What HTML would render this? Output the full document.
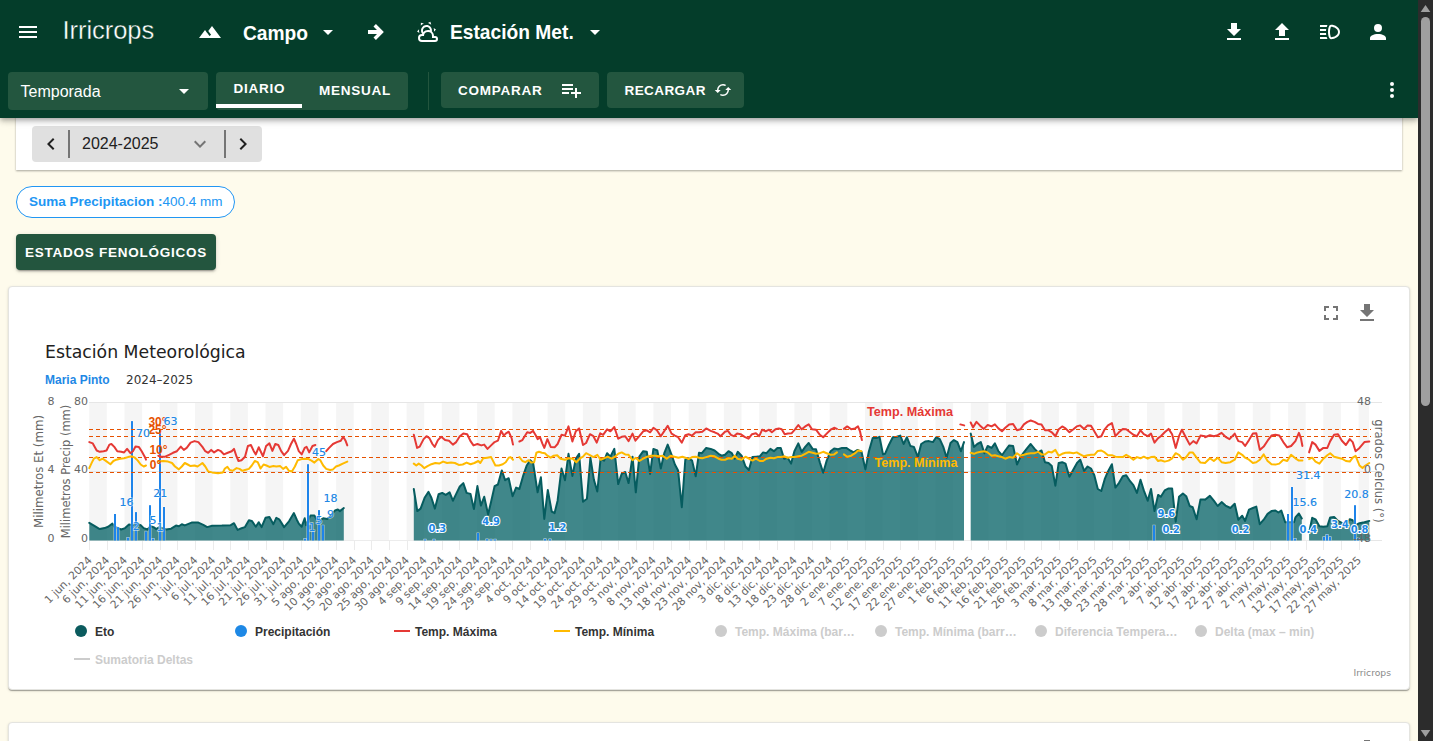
<!DOCTYPE html>
<html lang="es">
<head>
<meta charset="utf-8">
<title>Irricrops</title>
<style>
*{box-sizing:border-box;margin:0;padding:0}
html,body{width:1433px;height:741px;overflow:hidden}
body{position:relative;background:#fefbec;font-family:"Liberation Sans",sans-serif;color:#212121}
.abs{position:absolute}
svg{display:block}
/* top bars */
#bar1{left:0;top:0;width:1418px;height:64px;background:#043d2a}
#bar2{left:0;top:64px;width:1418px;height:54px;background:#043d2a;box-shadow:0 2px 4px -1px rgba(0,0,0,.2),0 4px 5px 0 rgba(0,0,0,.14),0 1px 10px 0 rgba(0,0,0,.12)}
.ic{position:absolute;width:24px;height:24px;fill:#fff}
#logo{left:62.5px;top:11.5px;font-size:25.5px;line-height:36px;color:#fff;letter-spacing:-0.05px;font-weight:400;white-space:nowrap;-webkit-text-stroke:0.35px #043d2a}
.navt{color:#fff;font-weight:700;font-size:20.6px;line-height:24px;white-space:nowrap;transform:scaleX(.932);transform-origin:0 50%}
.pill{background:#23563f;border-radius:4px}
.btxt{color:#fff;font-weight:700;font-size:13.5px;letter-spacing:0.75px;line-height:36px;white-space:nowrap}
/* scrollbar */
#sb{left:1418px;top:0;width:15px;height:741px;background:#2c2c2c}
#sbthumb{left:1421px;top:17px;width:9px;height:389px;border-radius:5px;background:#9f9f9f}
/* content */
#card1{left:16px;top:100px;width:1386px;height:70px;background:#fff;border-radius:0;box-shadow:0 1px 2px rgba(0,0,0,.35)}
#dsel{left:32px;top:126px;width:230px;height:36px;background:#e0e0e0;border-radius:4px}
#chip{left:16px;top:186px;width:219px;height:32px;border:1px solid #2196f3;border-radius:16px;background:#fff;color:#2196f3;font-size:13.5px;line-height:30px;padding-left:12px;white-space:nowrap}
#estados{left:16px;top:234px;width:200px;height:36px;background:#23553e;border-radius:4px;box-shadow:0 3px 1px -2px rgba(0,0,0,.2),0 2px 2px 0 rgba(0,0,0,.14),0 1px 5px 0 rgba(0,0,0,.12);text-align:center}
.card{background:#fff;border-radius:4px;border:1px solid #e4e4e0;box-shadow:0 2px 1px -1px rgba(0,0,0,.2),0 1px 1px 0 rgba(0,0,0,.14),0 1px 3px 0 rgba(0,0,0,.12)}
#card2{left:8px;top:286px;width:1402px;height:404px}
#card3{left:8px;top:722px;width:1402px;height:60px}
</style>
</head>
<body>
<!-- content behind bars -->
<div id="card1" class="abs"></div>
<div id="dsel" class="abs"></div>
<svg class="abs" style="left:38.7px;top:132px;fill:#212121" width="24" height="24" viewBox="0 0 24 24"><path d="M15.41,16.58L10.83,12L15.41,7.41L14,6L8,12L14,18L15.41,16.58Z"/></svg>
<div class="abs" style="left:68px;top:130px;width:2px;height:28px;background:#757575"></div>
<div class="abs" style="left:82px;top:132px;font-size:16px;line-height:24px;color:#212121">2024-2025</div>
<svg class="abs" style="left:188px;top:132px;fill:#757575" width="24" height="24" viewBox="0 0 24 24"><path d="M7.41,8.58L12,13.17L16.59,8.58L18,10L12,16L6,10L7.41,8.58Z"/></svg>
<div class="abs" style="left:224px;top:130px;width:2px;height:28px;background:#757575"></div>
<svg class="abs" style="left:231px;top:132px;fill:#212121" width="24" height="24" viewBox="0 0 24 24"><path d="M8.59,16.58L13.17,12L8.59,7.41L10,6L16,12L10,18L8.59,16.58Z"/></svg>

<div id="chip" class="abs"><b>Suma Precipitacion :</b>400.4 mm</div>
<div id="estados" class="abs"><span class="btxt" style="position:relative;top:1px">ESTADOS FENOLÓGICOS</span></div>

<div id="card2" class="abs card"></div>
<div id="card3" class="abs card"></div>
<svg class="abs" style="left:1355px;top:737px;fill:#757575" width="24" height="24" viewBox="0 0 24 24"><path d="M5,20H19V18H5M19,9H15V3H9V9H5L12,16L19,9Z"/></svg>

<!-- CHART -->
<svg id="chart" class="abs" style="left:0;top:287px" width="1418" height="402" viewBox="0 287 1418 402" font-family="'DejaVu Sans',sans-serif">
<rect x="89.2" y="402.5" width="17.6" height="138.0" fill="#f5f5f5"/>
<rect x="124.5" y="402.5" width="17.6" height="138.0" fill="#f5f5f5"/>
<rect x="159.8" y="402.5" width="17.6" height="138.0" fill="#f5f5f5"/>
<rect x="195.0" y="402.5" width="17.6" height="138.0" fill="#f5f5f5"/>
<rect x="230.3" y="402.5" width="17.6" height="138.0" fill="#f5f5f5"/>
<rect x="265.5" y="402.5" width="17.6" height="138.0" fill="#f5f5f5"/>
<rect x="300.8" y="402.5" width="17.6" height="138.0" fill="#f5f5f5"/>
<rect x="336.1" y="402.5" width="17.6" height="138.0" fill="#f5f5f5"/>
<rect x="371.3" y="402.5" width="17.6" height="138.0" fill="#f5f5f5"/>
<rect x="406.6" y="402.5" width="17.6" height="138.0" fill="#f5f5f5"/>
<rect x="441.8" y="402.5" width="17.6" height="138.0" fill="#f5f5f5"/>
<rect x="477.1" y="402.5" width="17.6" height="138.0" fill="#f5f5f5"/>
<rect x="512.4" y="402.5" width="17.6" height="138.0" fill="#f5f5f5"/>
<rect x="547.6" y="402.5" width="17.6" height="138.0" fill="#f5f5f5"/>
<rect x="582.9" y="402.5" width="17.6" height="138.0" fill="#f5f5f5"/>
<rect x="618.1" y="402.5" width="17.6" height="138.0" fill="#f5f5f5"/>
<rect x="653.4" y="402.5" width="17.6" height="138.0" fill="#f5f5f5"/>
<rect x="688.7" y="402.5" width="17.6" height="138.0" fill="#f5f5f5"/>
<rect x="723.9" y="402.5" width="17.6" height="138.0" fill="#f5f5f5"/>
<rect x="759.2" y="402.5" width="17.6" height="138.0" fill="#f5f5f5"/>
<rect x="794.4" y="402.5" width="17.6" height="138.0" fill="#f5f5f5"/>
<rect x="829.7" y="402.5" width="17.6" height="138.0" fill="#f5f5f5"/>
<rect x="865.0" y="402.5" width="17.6" height="138.0" fill="#f5f5f5"/>
<rect x="900.2" y="402.5" width="17.6" height="138.0" fill="#f5f5f5"/>
<rect x="935.5" y="402.5" width="17.6" height="138.0" fill="#f5f5f5"/>
<rect x="970.8" y="402.5" width="17.6" height="138.0" fill="#f5f5f5"/>
<rect x="1006.0" y="402.5" width="17.6" height="138.0" fill="#f5f5f5"/>
<rect x="1041.3" y="402.5" width="17.6" height="138.0" fill="#f5f5f5"/>
<rect x="1076.5" y="402.5" width="17.6" height="138.0" fill="#f5f5f5"/>
<rect x="1111.8" y="402.5" width="17.6" height="138.0" fill="#f5f5f5"/>
<rect x="1147.0" y="402.5" width="17.6" height="138.0" fill="#f5f5f5"/>
<rect x="1182.3" y="402.5" width="17.6" height="138.0" fill="#f5f5f5"/>
<rect x="1217.6" y="402.5" width="17.6" height="138.0" fill="#f5f5f5"/>
<rect x="1252.8" y="402.5" width="17.6" height="138.0" fill="#f5f5f5"/>
<rect x="1288.1" y="402.5" width="17.6" height="138.0" fill="#f5f5f5"/>
<rect x="1323.3" y="402.5" width="17.6" height="138.0" fill="#f5f5f5"/>
<rect x="1358.6" y="402.5" width="10.4" height="138.0" fill="#f5f5f5"/>
<path d="M89 402.5H1382" stroke="#e6e6e6" stroke-width="1"/>
<path d="M89 471.5H1382" stroke="#e6e6e6" stroke-width="1"/>
<path d="M89 540.5H1382" stroke="#e6e6e6" stroke-width="1"/>
<path d="M89 540.5H1369" stroke="#ececec" stroke-width="1"/>
<path d="M89.5 541V550M107.5 541V550M125.5 541V550M142.5 541V550M160.5 541V550M177.5 541V550M195.5 541V550M213.5 541V550M230.5 541V550M248.5 541V550M266.5 541V550M283.5 541V550M301.5 541V550M318.5 541V550M336.5 541V550M354.5 541V550M371.5 541V550M389.5 541V550M407.5 541V550M424.5 541V550M442.5 541V550M459.5 541V550M477.5 541V550M495.5 541V550M512.5 541V550M530.5 541V550M548.5 541V550M565.5 541V550M583.5 541V550M601.5 541V550M618.5 541V550M636.5 541V550M653.5 541V550M671.5 541V550M689.5 541V550M706.5 541V550M724.5 541V550M742.5 541V550M759.5 541V550M777.5 541V550M794.5 541V550M812.5 541V550M830.5 541V550M847.5 541V550M865.5 541V550M883.5 541V550M900.5 541V550M918.5 541V550M935.5 541V550M953.5 541V550M971.5 541V550M988.5 541V550M1006.5 541V550M1024.5 541V550M1041.5 541V550M1059.5 541V550M1077.5 541V550M1094.5 541V550M1112.5 541V550M1129.5 541V550M1147.5 541V550M1165.5 541V550M1182.5 541V550M1200.5 541V550M1218.5 541V550M1235.5 541V550M1253.5 541V550M1270.5 541V550M1288.5 541V550M1306.5 541V550M1323.5 541V550M1341.5 541V550M1359.5 541V550" stroke="#ebebeb" stroke-width="1" fill="none"/>
<path d="M89.3,540.5 L89.3,522.8 94.8,526.2 99.7,529.1 104.6,528.1 108.1,526.7 112.4,523.6 114.3,526.7 121.2,529.5 125.1,528.1 129.0,524.4 132.9,525.2 136.2,523.6 140.7,525.2 143.7,528.1 147.6,529.5 150.5,526.2 153.5,527.1 156.4,529.1 159.3,527.1 166.2,529.5 171.1,528.7 176.0,525.6 178.9,526.2 181.8,524.2 184.8,525.4 191.6,522.6 198.4,522.6 203.3,524.8 207.2,527.1 212.1,525.8 221.9,525.6 230.7,525.2 234.0,523.2 237.6,529.9 241.5,528.3 245.0,527.1 248.9,520.3 251.8,520.9 255.8,526.7 258.7,522.2 261.6,527.1 265.5,517.8 269.4,517.0 273.4,524.2 276.3,517.9 279.2,519.3 284.1,527.1 289.0,521.3 293.9,513.1 296.8,519.7 298.8,523.6 301.7,526.7 304.7,518.3 306.0,525.2 310.5,515.4 314.4,515.4 316.4,519.3 319.3,520.9 323.2,518.3 327.2,518.9 331.1,515.4 335.0,510.5 337.9,509.5 339.9,511.1 343.8,508.0 L343.8,540.5Z" fill="#005f63" fill-opacity="0.75"/>
<polyline points="89.3,522.8 94.8,526.2 99.7,529.1 104.6,528.1 108.1,526.7 112.4,523.6 114.3,526.7 121.2,529.5 125.1,528.1 129.0,524.4 132.9,525.2 136.2,523.6 140.7,525.2 143.7,528.1 147.6,529.5 150.5,526.2 153.5,527.1 156.4,529.1 159.3,527.1 166.2,529.5 171.1,528.7 176.0,525.6 178.9,526.2 181.8,524.2 184.8,525.4 191.6,522.6 198.4,522.6 203.3,524.8 207.2,527.1 212.1,525.8 221.9,525.6 230.7,525.2 234.0,523.2 237.6,529.9 241.5,528.3 245.0,527.1 248.9,520.3 251.8,520.9 255.8,526.7 258.7,522.2 261.6,527.1 265.5,517.8 269.4,517.0 273.4,524.2 276.3,517.9 279.2,519.3 284.1,527.1 289.0,521.3 293.9,513.1 296.8,519.7 298.8,523.6 301.7,526.7 304.7,518.3 306.0,525.2 310.5,515.4 314.4,515.4 316.4,519.3 319.3,520.9 323.2,518.3 327.2,518.9 331.1,515.4 335.0,510.5 337.9,509.5 339.9,511.1 343.8,508.0" fill="none" stroke="#065c5f" stroke-width="2" stroke-linejoin="round" stroke-linecap="round"/>
<path d="M413.8,540.5 L413.8,489.0 417.3,511.1 420.6,508.6 424.6,497.8 428.5,491.9 431.4,497.8 434.9,508.6 438.6,494.3 442.2,492.9 445.7,494.9 449.6,492.3 452.9,500.7 456.2,493.9 459.8,486.5 463.3,483.1 466.6,492.9 470.5,493.9 473.9,509.1 477.4,486.1 480.9,505.6 484.2,496.8 488.1,514.4 491.1,501.7 494.6,486.1 497.9,484.5 501.8,470.4 505.1,480.2 508.7,478.2 512.6,496.2 516.1,487.6 519.4,489.0 523.3,475.3 526.7,465.5 530.2,460.2 533.1,463.0 537.6,492.3 540.9,477.3 544.3,518.9 547.8,490.0 551.7,511.5 554.6,513.1 557.6,500.7 561.5,468.5 565.0,480.2 568.5,453.8 572.4,475.9 575.8,458.7 579.1,453.8 583.0,501.7 586.9,498.8 590.4,457.7 593.9,479.8 597.3,491.5 600.6,458.7 604.1,460.6 607.1,453.2 610.4,456.7 614.3,448.9 618.2,484.1 621.7,473.9 625.2,472.0 628.6,483.1 632.5,456.7 635.8,492.3 639.3,456.7 643.2,451.2 646.8,451.8 650.1,473.9 653.4,448.9 657.3,450.5 660.8,468.5 664.4,452.8 667.7,444.6 671.6,454.8 674.9,464.5 678.1,470.4 681.8,507.2 685.3,459.7 688.6,458.3 692.1,460.6 695.7,476.3 699.0,452.8 701.9,453.2 706.2,447.9 710.7,448.9 714.6,450.5 718.5,453.8 721.5,455.7 725.0,454.8 728.5,451.2 731.8,453.2 734.8,458.7 737.7,451.8 741.6,455.7 745.5,466.5 748.9,470.0 752.4,457.1 756.3,456.7 759.8,456.3 763.1,452.4 766.5,453.2 770.4,448.9 773.9,451.2 777.4,447.9 780.7,447.9 784.1,458.7 787.6,457.7 791.1,463.6 794.4,451.2 798.3,443.4 801.7,451.8 805.2,446.9 808.7,443.0 812.6,448.9 816.0,449.3 819.9,462.6 823.2,472.8 826.7,460.6 830.6,451.2 834.1,448.5 838.1,449.3 842.0,447.9 846.3,447.9 850.2,450.5 853.7,452.4 857.6,449.9 861.5,451.8 865.4,469.4 868.8,451.8 872.7,438.1 876.6,438.1 879.5,436.8 883.0,454.4 885.0,453.8 888.9,445.0 892.8,437.2 896.7,436.8 900.3,435.6 903.6,444.0 906.9,437.2 910.4,446.0 913.9,446.9 917.9,457.1 921.2,444.0 925.1,441.5 929.0,441.1 932.9,442.1 936.2,437.2 939.8,439.1 943.3,446.9 946.6,457.7 950.5,443.0 953.9,440.1 957.4,442.1 960.9,451.2 964.0,442.1 L964.0,540.5Z" fill="#005f63" fill-opacity="0.75"/>
<polyline points="413.8,489.0 417.3,511.1 420.6,508.6 424.6,497.8 428.5,491.9 431.4,497.8 434.9,508.6 438.6,494.3 442.2,492.9 445.7,494.9 449.6,492.3 452.9,500.7 456.2,493.9 459.8,486.5 463.3,483.1 466.6,492.9 470.5,493.9 473.9,509.1 477.4,486.1 480.9,505.6 484.2,496.8 488.1,514.4 491.1,501.7 494.6,486.1 497.9,484.5 501.8,470.4 505.1,480.2 508.7,478.2 512.6,496.2 516.1,487.6 519.4,489.0 523.3,475.3 526.7,465.5 530.2,460.2 533.1,463.0 537.6,492.3 540.9,477.3 544.3,518.9 547.8,490.0 551.7,511.5 554.6,513.1 557.6,500.7 561.5,468.5 565.0,480.2 568.5,453.8 572.4,475.9 575.8,458.7 579.1,453.8 583.0,501.7 586.9,498.8 590.4,457.7 593.9,479.8 597.3,491.5 600.6,458.7 604.1,460.6 607.1,453.2 610.4,456.7 614.3,448.9 618.2,484.1 621.7,473.9 625.2,472.0 628.6,483.1 632.5,456.7 635.8,492.3 639.3,456.7 643.2,451.2 646.8,451.8 650.1,473.9 653.4,448.9 657.3,450.5 660.8,468.5 664.4,452.8 667.7,444.6 671.6,454.8 674.9,464.5 678.1,470.4 681.8,507.2 685.3,459.7 688.6,458.3 692.1,460.6 695.7,476.3 699.0,452.8 701.9,453.2 706.2,447.9 710.7,448.9 714.6,450.5 718.5,453.8 721.5,455.7 725.0,454.8 728.5,451.2 731.8,453.2 734.8,458.7 737.7,451.8 741.6,455.7 745.5,466.5 748.9,470.0 752.4,457.1 756.3,456.7 759.8,456.3 763.1,452.4 766.5,453.2 770.4,448.9 773.9,451.2 777.4,447.9 780.7,447.9 784.1,458.7 787.6,457.7 791.1,463.6 794.4,451.2 798.3,443.4 801.7,451.8 805.2,446.9 808.7,443.0 812.6,448.9 816.0,449.3 819.9,462.6 823.2,472.8 826.7,460.6 830.6,451.2 834.1,448.5 838.1,449.3 842.0,447.9 846.3,447.9 850.2,450.5 853.7,452.4 857.6,449.9 861.5,451.8 865.4,469.4 868.8,451.8 872.7,438.1 876.6,438.1 879.5,436.8 883.0,454.4 885.0,453.8 888.9,445.0 892.8,437.2 896.7,436.8 900.3,435.6 903.6,444.0 906.9,437.2 910.4,446.0 913.9,446.9 917.9,457.1 921.2,444.0 925.1,441.5 929.0,441.1 932.9,442.1 936.2,437.2 939.8,439.1 943.3,446.9 946.6,457.7 950.5,443.0 953.9,440.1 957.4,442.1 960.9,451.2 964.0,442.1" fill="none" stroke="#065c5f" stroke-width="2" stroke-linejoin="round" stroke-linecap="round"/>
<path d="M970.7,540.5 L970.7,433.6 974.0,446.9 977.3,444.0 980.8,442.1 984.4,453.2 987.7,446.0 991.6,447.9 994.9,443.4 998.4,451.2 1002.0,455.2 1005.3,450.5 1009.2,445.4 1013.1,446.0 1017.0,464.5 1020.4,457.1 1023.9,452.4 1027.4,447.9 1030.7,444.0 1034.6,448.9 1038.0,452.4 1041.5,450.5 1045.0,462.2 1048.5,463.0 1051.8,466.1 1055.4,485.7 1058.7,463.0 1062.2,462.2 1065.5,463.6 1069.4,476.7 1073.4,469.4 1077.3,462.6 1080.2,459.7 1084.1,470.8 1087.6,466.5 1091.0,468.5 1094.3,475.3 1097.8,489.0 1101.3,491.0 1104.7,479.2 1108.0,471.4 1111.9,464.2 1115.4,487.6 1118.9,483.1 1122.8,476.3 1126.2,475.3 1130.1,481.2 1133.4,485.1 1136.9,492.9 1140.5,479.8 1143.8,490.4 1147.7,500.7 1151.0,489.0 1154.5,511.1 1158.1,494.9 1160.8,496.8 1164.7,490.4 1168.6,488.4 1172.1,488.4 1175.7,521.7 1179.0,496.8 1182.9,493.5 1186.2,496.2 1189.7,506.0 1192.7,507.2 1196.6,519.3 1200.5,499.4 1205.0,499.4 1205.0,499.8 1209.9,495.9 1213.8,500.7 1217.7,506.0 1221.6,502.1 1225.5,505.6 1230.4,508.0 1234.7,503.7 1238.3,519.7 1242.2,515.8 1245.1,520.9 1249.0,509.6 1252.9,508.0 1256.3,506.6 1259.8,524.2 1263.7,519.7 1267.6,513.9 1271.5,511.1 1275.4,510.5 1278.4,512.5 1281.3,510.5 1285.2,522.3 1294.0,522.3 1295.4,517.4 1298.9,513.5 1301.8,518.4 L1301.8,540.5Z" fill="#005f63" fill-opacity="0.75"/>
<polyline points="970.7,433.6 974.0,446.9 977.3,444.0 980.8,442.1 984.4,453.2 987.7,446.0 991.6,447.9 994.9,443.4 998.4,451.2 1002.0,455.2 1005.3,450.5 1009.2,445.4 1013.1,446.0 1017.0,464.5 1020.4,457.1 1023.9,452.4 1027.4,447.9 1030.7,444.0 1034.6,448.9 1038.0,452.4 1041.5,450.5 1045.0,462.2 1048.5,463.0 1051.8,466.1 1055.4,485.7 1058.7,463.0 1062.2,462.2 1065.5,463.6 1069.4,476.7 1073.4,469.4 1077.3,462.6 1080.2,459.7 1084.1,470.8 1087.6,466.5 1091.0,468.5 1094.3,475.3 1097.8,489.0 1101.3,491.0 1104.7,479.2 1108.0,471.4 1111.9,464.2 1115.4,487.6 1118.9,483.1 1122.8,476.3 1126.2,475.3 1130.1,481.2 1133.4,485.1 1136.9,492.9 1140.5,479.8 1143.8,490.4 1147.7,500.7 1151.0,489.0 1154.5,511.1 1158.1,494.9 1160.8,496.8 1164.7,490.4 1168.6,488.4 1172.1,488.4 1175.7,521.7 1179.0,496.8 1182.9,493.5 1186.2,496.2 1189.7,506.0 1192.7,507.2 1196.6,519.3 1200.5,499.4 1205.0,499.4 1205.0,499.8 1209.9,495.9 1213.8,500.7 1217.7,506.0 1221.6,502.1 1225.5,505.6 1230.4,508.0 1234.7,503.7 1238.3,519.7 1242.2,515.8 1245.1,520.9 1249.0,509.6 1252.9,508.0 1256.3,506.6 1259.8,524.2 1263.7,519.7 1267.6,513.9 1271.5,511.1 1275.4,510.5 1278.4,512.5 1281.3,510.5 1285.2,522.3 1294.0,522.3 1295.4,517.4 1298.9,513.5 1301.8,518.4" fill="none" stroke="#065c5f" stroke-width="2" stroke-linejoin="round" stroke-linecap="round"/>
<path d="M1309.1,540.5 L1309.1,533.0 1312.2,517.8 1315.5,519.3 1319.4,526.2 1323.4,526.8 1327.3,526.2 1330.2,517.4 1334.1,517.0 1338.0,520.9 1341.9,522.9 1345.9,523.2 1349.8,519.3 1352.7,520.3 1355.6,525.2 1359.5,523.2 1364.4,522.3 1369.3,520.9 L1369.3,540.5Z" fill="#005f63" fill-opacity="0.75"/>
<polyline points="1309.1,533.0 1312.2,517.8 1315.5,519.3 1319.4,526.2 1323.4,526.8 1327.3,526.2 1330.2,517.4 1334.1,517.0 1338.0,520.9 1341.9,522.9 1345.9,523.2 1349.8,519.3 1352.7,520.3 1355.6,525.2 1359.5,523.2 1364.4,522.3 1369.3,520.9" fill="none" stroke="#065c5f" stroke-width="2" stroke-linejoin="round" stroke-linecap="round"/>
<rect x="113.5" y="513.5" width="3" height="27.0" fill="#fff" fill-opacity="0.6"/>
<rect x="114" y="514.0" width="2" height="26.5" fill="#1e84ea"/>
<rect x="116.5" y="526.6" width="3" height="13.9" fill="#fff" fill-opacity="0.6"/>
<rect x="117" y="527.1" width="2" height="13.4" fill="#1e84ea"/>
<rect x="126.5" y="537.0" width="3" height="3.5" fill="#fff" fill-opacity="0.8"/>
<rect x="127" y="537.5" width="2" height="3.0" fill="#1e84ea"/>
<rect x="130.5" y="420.6" width="3" height="119.9" fill="#fff" fill-opacity="0.6"/>
<rect x="131" y="421.1" width="2" height="119.4" fill="#1e84ea"/>
<rect x="134.5" y="511.6" width="3" height="28.9" fill="#fff" fill-opacity="0.6"/>
<rect x="135" y="512.1" width="2" height="28.4" fill="#1e84ea"/>
<rect x="144.5" y="530.9" width="3" height="9.6" fill="#fff" fill-opacity="0.6"/>
<rect x="145" y="531.4" width="2" height="9.1" fill="#1e84ea"/>
<rect x="148.5" y="504.7" width="3" height="35.8" fill="#fff" fill-opacity="0.6"/>
<rect x="149" y="505.2" width="2" height="35.3" fill="#1e84ea"/>
<rect x="151.5" y="538.0" width="3" height="2.5" fill="#fff" fill-opacity="0.8"/>
<rect x="152" y="538.5" width="2" height="2.0" fill="#1e84ea"/>
<rect x="158.5" y="428.8" width="3" height="111.7" fill="#fff" fill-opacity="0.6"/>
<rect x="159" y="429.3" width="2" height="111.2" fill="#1e84ea"/>
<rect x="162.5" y="506.5" width="3" height="34.0" fill="#fff" fill-opacity="0.6"/>
<rect x="163" y="507.0" width="2" height="33.5" fill="#1e84ea"/>
<rect x="303.5" y="538.0" width="3" height="2.5" fill="#fff" fill-opacity="0.8"/>
<rect x="304" y="538.5" width="2" height="2.0" fill="#1e84ea"/>
<rect x="306.5" y="463.7" width="3" height="76.8" fill="#fff" fill-opacity="0.6"/>
<rect x="307" y="464.2" width="2" height="76.3" fill="#1e84ea"/>
<rect x="311.5" y="530.9" width="3" height="9.6" fill="#fff" fill-opacity="0.6"/>
<rect x="312" y="531.4" width="2" height="9.1" fill="#1e84ea"/>
<rect x="317.5" y="509.6" width="3" height="30.9" fill="#fff" fill-opacity="0.6"/>
<rect x="318" y="510.1" width="2" height="30.4" fill="#1e84ea"/>
<rect x="321.5" y="524.7" width="3" height="15.8" fill="#fff" fill-opacity="0.6"/>
<rect x="322" y="525.2" width="2" height="15.3" fill="#1e84ea"/>
<rect x="423.5" y="538.8" width="3" height="1.7" fill="#fff" fill-opacity="0.8"/>
<rect x="424" y="539.3" width="2" height="1.2" fill="#1e84ea"/>
<rect x="432.5" y="538.8" width="3" height="1.7" fill="#fff" fill-opacity="0.8"/>
<rect x="433" y="539.3" width="2" height="1.2" fill="#1e84ea"/>
<rect x="476.5" y="532.5" width="3" height="8.0" fill="#fff" fill-opacity="0.6"/>
<rect x="477" y="533.0" width="2" height="7.5" fill="#1e84ea"/>
<rect x="485.5" y="538.6" width="3" height="1.9" fill="#fff" fill-opacity="0.8"/>
<rect x="486" y="539.1" width="2" height="1.4" fill="#1e84ea"/>
<rect x="489.5" y="538.8" width="3" height="1.7" fill="#fff" fill-opacity="0.8"/>
<rect x="490" y="539.3" width="2" height="1.2" fill="#1e84ea"/>
<rect x="493.5" y="538.8" width="3" height="1.7" fill="#fff" fill-opacity="0.8"/>
<rect x="494" y="539.3" width="2" height="1.2" fill="#1e84ea"/>
<rect x="543.5" y="538.4" width="3" height="2.1" fill="#fff" fill-opacity="0.8"/>
<rect x="544" y="538.9" width="2" height="1.6" fill="#1e84ea"/>
<rect x="548.5" y="538.6" width="3" height="1.9" fill="#fff" fill-opacity="0.8"/>
<rect x="549" y="539.1" width="2" height="1.4" fill="#1e84ea"/>
<rect x="1152.5" y="524.7" width="3" height="15.8" fill="#fff" fill-opacity="0.6"/>
<rect x="1153" y="525.2" width="2" height="15.3" fill="#1e84ea"/>
<rect x="1286.5" y="513.5" width="3" height="27.0" fill="#fff" fill-opacity="0.6"/>
<rect x="1287" y="514.0" width="2" height="26.5" fill="#1e84ea"/>
<rect x="1290.5" y="486.5" width="3" height="54.0" fill="#fff" fill-opacity="0.6"/>
<rect x="1291" y="487.0" width="2" height="53.5" fill="#1e84ea"/>
<rect x="1293.5" y="538.0" width="3" height="2.5" fill="#fff" fill-opacity="0.8"/>
<rect x="1294" y="538.5" width="2" height="2.0" fill="#1e84ea"/>
<rect x="1322.5" y="536.4" width="3" height="4.1" fill="#fff" fill-opacity="0.8"/>
<rect x="1323" y="536.9" width="2" height="3.6" fill="#1e84ea"/>
<rect x="1325.5" y="534.1" width="3" height="6.4" fill="#fff" fill-opacity="0.8"/>
<rect x="1326" y="534.6" width="2" height="5.9" fill="#1e84ea"/>
<rect x="1328.5" y="536.4" width="3" height="4.1" fill="#fff" fill-opacity="0.8"/>
<rect x="1329" y="536.9" width="2" height="3.6" fill="#1e84ea"/>
<rect x="1353.5" y="504.7" width="3" height="35.8" fill="#fff" fill-opacity="0.6"/>
<rect x="1354" y="505.2" width="2" height="35.3" fill="#1e84ea"/>
<rect x="1356.5" y="537.6" width="3" height="2.9" fill="#fff" fill-opacity="0.8"/>
<rect x="1357" y="538.1" width="2" height="2.4" fill="#1e84ea"/>
<path d="M89 429.5H1371" stroke="#e65100" stroke-width="1.2" stroke-dasharray="4,3"/>
<path d="M89 436.5H1371" stroke="#e65100" stroke-width="1.2" stroke-dasharray="4,3"/>
<path d="M89 457.5H1371" stroke="#e65100" stroke-width="1.2" stroke-dasharray="4,3"/>
<path d="M89 472.5H1371" stroke="#e65100" stroke-width="1.2" stroke-dasharray="4,3"/>
<polyline points="89.3,442.1 92.8,443.4 96.7,450.5 99.7,451.8 103.6,451.2 106.5,450.5 109.4,444.6 111.4,444.0 114.3,446.9 117.3,451.2 121.2,451.8 124.1,452.4 127.1,448.9 130.4,453.2 132.9,451.2 135.5,446.6 138.8,446.9 141.7,451.2 144.7,456.7 146.0,459.7" fill="none" stroke="#e53935" stroke-width="2" stroke-linejoin="round" stroke-linecap="round"/>
<polyline points="158.3,455.7 161.3,456.7 165.2,456.7 169.1,454.8 173.0,452.8 176.9,451.2 180.8,446.6 183.8,449.9 186.7,447.9 190.6,442.6 194.5,441.1 198.4,442.1 202.4,446.9 205.3,451.2 208.2,452.8 211.2,449.9 214.1,452.4 218.0,449.9 220.9,451.2 223.9,454.4 227.8,452.8 231.7,451.2 234.0,448.9 236.6,456.7 238.5,461.0 241.5,460.2 245.0,456.7 247.9,446.0 250.9,445.0 253.8,451.2 255.8,454.4 258.7,447.3 260.6,451.2 263.0,456.3 266.1,446.0 269.4,443.4 272.4,450.9 275.3,444.0 278.3,445.0 281.2,451.2 284.1,455.2 288.0,450.9 291.0,444.0 293.9,438.7 296.2,444.0 298.8,451.2 301.7,454.4 304.7,447.9 306.6,446.9 309.2,452.4 312.5,446.0 315.4,445.0" fill="none" stroke="#e53935" stroke-width="2" stroke-linejoin="round" stroke-linecap="round"/>
<polyline points="326.2,451.2 329.1,447.9 333.0,444.0 336.9,442.1 340.8,440.7 343.2,436.8 345.7,441.1 347.3,445.4" fill="none" stroke="#e53935" stroke-width="2" stroke-linejoin="round" stroke-linecap="round"/>
<polyline points="413.8,434.8 417.1,447.9 419.7,446.6 423.6,439.1 426.5,436.2 429.4,438.1 432.4,444.0 434.7,446.9 437.9,440.1 441.2,436.8 445.1,440.1 449.0,440.7 452.9,444.6 456.2,442.1 459.8,436.2 463.3,433.6 467.2,434.2 470.5,441.1 473.5,445.4 477.4,444.0 481.3,445.4 484.2,444.6 487.5,448.9 491.1,445.4 494.6,442.1 497.9,440.7 501.2,430.9 503.8,435.6 505.7,433.6 508.7,431.7 511.6,438.1 513.0,444.6" fill="none" stroke="#e53935" stroke-width="2" stroke-linejoin="round" stroke-linecap="round"/>
<polyline points="519.4,441.5 522.4,440.1 524.7,436.2 527.2,432.3 530.2,432.9 533.1,430.9 535.7,435.2 537.6,439.1 540.0,437.2 542.3,443.4 544.3,447.9 547.4,439.1 550.7,446.9 554.6,447.3 557.6,444.0 561.5,434.8 565.0,435.6 568.5,426.4 572.4,441.5 575.8,431.3 579.1,428.4 583.0,445.0 586.1,443.0 590.0,434.2 593.4,436.2 596.7,442.6 600.2,433.3 603.1,434.8 607.1,429.3 610.4,431.3 614.3,427.0 618.2,438.7 621.7,436.8 625.2,436.2 628.6,441.1 632.5,433.6 635.4,440.7 639.3,436.2 643.2,431.3 646.8,430.3 650.1,432.3 653.4,427.8 656.9,430.3 660.8,436.2 664.4,430.9 667.7,425.8 671.6,433.6 674.9,435.6 678.1,437.2 681.8,442.6 685.3,435.2 688.6,434.2 692.1,435.6 695.7,432.3 699.0,432.3 702.3,431.7 706.2,428.4 710.7,430.9 714.6,432.3 717.6,433.6 720.5,436.2 725.0,431.7 727.9,430.9 730.9,434.8 733.8,436.2 737.1,433.6 740.6,434.2 744.6,436.8 748.5,438.7 752.0,434.2 755.9,433.3 759.2,436.2 762.2,429.7 765.7,431.3 769.0,429.7 771.9,432.3 775.5,429.3 778.8,428.4 781.7,429.3 784.7,434.2 788.0,433.6 791.5,433.3 795.0,429.3 798.3,425.0 801.7,429.3 805.2,426.4 808.7,424.4 812.0,429.3 816.0,429.7 819.9,434.8 823.2,437.2 826.7,433.6 830.6,429.7 834.1,427.8 836.9,428.9" fill="none" stroke="#e53935" stroke-width="2" stroke-linejoin="round" stroke-linecap="round"/>
<polyline points="843.9,428.9 847.2,426.4 851.2,429.3 855.1,428.4 858.0,426.4 860.0,431.3 861.9,440.1" fill="none" stroke="#e53935" stroke-width="2" stroke-linejoin="round" stroke-linecap="round"/>
<polyline points="960.3,424.4 964.2,425.4" fill="none" stroke="#e53935" stroke-width="2" stroke-linejoin="round" stroke-linecap="round"/>
<polyline points="970.7,422.5 973.0,427.4 976.5,421.9 979.9,425.4 983.8,428.9 987.7,425.0 991.6,426.4 994.9,424.4 998.4,428.4 1002.0,431.3 1005.3,427.8 1009.2,424.4 1013.1,423.9 1017.0,430.3 1020.4,429.3 1023.9,424.4 1027.4,421.9 1030.7,420.5 1034.6,421.9 1038.0,423.9 1041.5,424.4 1045.0,430.3 1048.5,430.3 1051.8,432.3 1055.4,436.2 1058.7,429.3 1062.2,426.4 1065.5,428.4 1069.4,432.3 1073.4,429.3 1076.7,426.4 1080.2,425.4 1084.1,428.9 1087.6,425.4 1091.0,425.8 1094.3,431.3 1097.8,437.2 1101.3,436.2 1104.7,429.3 1108.0,425.4 1111.9,423.1 1115.4,436.2 1118.9,432.3 1122.8,428.9 1126.2,429.3 1130.1,432.3 1133.4,434.8 1136.9,436.2 1140.5,430.3 1143.8,434.2 1147.7,436.2 1151.0,433.6 1154.5,442.6 1158.1,438.1 1160.8,436.2 1164.7,432.3 1168.6,428.9 1172.1,434.2 1175.7,447.9 1179.0,436.2 1181.9,429.7 1185.8,437.2 1189.7,444.6 1193.3,441.1 1196.6,443.4 1200.5,435.6 1205.0,436.2 1205.0,437.2 1209.9,435.2 1213.8,436.2 1217.7,435.2 1221.6,432.9 1225.5,436.8 1229.5,439.1 1234.7,433.6 1238.3,441.1 1242.2,442.1 1245.1,446.0 1249.0,440.1 1252.9,433.6 1256.3,433.3 1259.8,449.9 1263.7,446.6 1267.6,440.7 1271.5,435.6 1275.4,434.8 1279.3,435.6 1283.3,442.1 1287.2,447.3 1291.1,446.0 1295.4,441.1 1298.9,432.9 1300.9,438.1 1302.4,446.0" fill="none" stroke="#e53935" stroke-width="2" stroke-linejoin="round" stroke-linecap="round"/>
<polyline points="1309.1,452.4 1312.2,442.1 1315.5,444.6 1319.4,450.9 1323.4,447.9 1327.3,447.9 1330.2,441.1 1334.1,434.8 1338.0,434.2 1341.9,440.7 1345.9,445.0 1349.8,439.1 1352.7,442.1 1355.6,451.3 1359.5,447.9 1364.4,442.1 1369.3,441.5" fill="none" stroke="#e53935" stroke-width="2" stroke-linejoin="round" stroke-linecap="round"/>
<polyline points="89.3,468.1 91.8,462.6 93.8,458.7 96.7,457.1 99.7,460.2 102.6,458.7 105.5,460.6 110.4,464.2 113.4,461.0 116.3,459.7 120.2,458.7 124.1,458.3 128.0,457.1 131.9,456.3 134.9,457.7 137.8,460.6 140.7,464.5 143.7,466.5 146.0,465.5" fill="none" stroke="#ffba00" stroke-width="2" stroke-linejoin="round" stroke-linecap="round"/>
<polyline points="158.3,461.6 163.2,461.0 168.1,461.6 172.0,463.0 175.0,466.5 178.9,469.4 181.8,466.5 184.8,463.0 187.7,464.5 190.6,466.1 194.5,465.5 197.5,466.5 200.4,464.5 202.4,463.0 205.3,466.5 208.2,471.4 212.1,472.4 218.0,473.3 222.9,472.4 224.9,468.5 227.4,466.9 229.7,470.0 232.7,470.8 236.6,468.1 239.5,468.9 242.5,470.8 245.0,470.0 248.9,468.9 251.8,465.5 254.8,461.0 257.7,462.2 260.6,468.5 263.6,464.5 266.5,465.5 269.4,466.9 273.4,466.1 276.3,466.5 280.2,466.1 283.1,468.9 286.1,466.9 289.0,470.8 291.9,471.4 294.9,466.5 297.8,460.2 301.7,459.1 305.6,458.7 308.6,459.1 311.5,460.6 314.4,462.6 318.3,459.1 320.3,460.2 323.2,465.5 326.2,468.9 330.1,470.0 333.0,469.4 336.0,466.5 338.9,465.5 342.8,463.6 347.3,461.6" fill="none" stroke="#ffba00" stroke-width="2" stroke-linejoin="round" stroke-linecap="round"/>
<polyline points="413.8,463.6 416.3,465.5 418.7,463.6 421.6,465.5 424.2,468.1 427.5,466.1 431.4,464.2 435.3,463.0 439.2,463.6 443.1,461.6 447.1,463.0 451.0,462.6 454.9,463.0 458.8,464.9 462.7,464.5 466.6,462.6 470.5,464.2 474.4,463.0 478.3,461.0 480.3,463.0 483.2,458.3 487.2,457.7 491.1,457.1 493.4,461.6 495.4,465.5 498.9,465.5 502.8,464.2 505.7,462.2 508.7,457.7 510.6,457.1 513.0,459.7" fill="none" stroke="#ffba00" stroke-width="2" stroke-linejoin="round" stroke-linecap="round"/>
<polyline points="519.4,457.1 522.4,461.0 525.3,462.2 528.6,460.2 531.2,462.6 534.1,462.2 536.4,452.8 539.0,451.8 541.9,452.8 544.9,453.2 547.4,455.7 550.7,457.7 553.7,455.7 557.2,455.2 560.5,458.7 565.0,459.7 568.9,458.3 572.8,458.7 576.3,462.2 579.7,458.7 583.0,456.7 586.1,453.2 589.4,454.8 593.4,457.1 597.3,454.8 600.6,459.7 604.1,458.3 607.6,456.7 611.6,458.7 614.9,456.7 618.2,453.8 621.7,452.4 625.2,454.4 628.6,454.8 632.5,460.2 635.8,457.7 639.3,461.0 643.2,458.7 647.2,456.7 651.1,455.7 655.0,455.7 658.9,456.3 662.8,455.7 666.7,458.7 670.6,455.7 674.5,456.7 678.4,457.7 682.4,456.7 685.3,457.7 688.6,459.1 692.1,457.1 695.7,456.7 699.0,457.7 702.3,458.3 706.2,457.1 710.7,455.7 714.6,456.3 718.5,458.7 721.5,459.7 725.0,459.7 728.5,458.3 731.8,458.7 734.8,455.7 737.7,458.7 741.6,459.7 745.5,456.7 748.9,458.7 752.4,460.6 755.9,458.7 759.8,461.0 763.1,461.0 766.5,458.7 770.4,457.7 773.9,458.3 777.4,457.1 780.7,457.1 784.1,456.3 787.6,457.7 791.1,457.1 794.4,457.1 798.3,456.3 801.7,455.7 805.2,453.8 808.7,451.8 812.6,452.8 816.0,453.8 819.9,453.2 823.2,451.8 826.7,453.2 830.6,454.8 834.1,454.4 836.9,452.4" fill="none" stroke="#ffba00" stroke-width="2" stroke-linejoin="round" stroke-linecap="round"/>
<polyline points="843.9,454.4 847.2,456.7 851.2,455.7 855.1,453.2 858.0,450.5 861.5,451.2" fill="none" stroke="#ffba00" stroke-width="2" stroke-linejoin="round" stroke-linecap="round"/>
<polyline points="970.7,452.8 974.0,453.8 977.3,452.4 980.8,451.8 984.4,451.2 987.7,452.4 991.6,455.7 994.9,455.2 998.4,456.3 1002.0,457.1 1005.3,458.7 1009.2,457.1 1013.1,457.7 1017.0,453.2 1020.4,455.7 1023.9,454.8 1027.4,453.8 1030.7,453.2 1034.6,453.2 1038.0,451.8 1041.5,454.4 1045.0,454.4 1048.5,451.8 1051.8,452.4 1055.4,449.9 1058.7,455.7 1062.2,453.8 1065.5,452.8 1069.4,452.4 1073.4,453.2 1076.7,452.4 1080.2,454.4 1084.1,456.3 1087.6,455.2 1091.0,454.8 1094.3,454.8 1097.8,450.9 1101.3,450.5 1104.7,452.4 1108.0,455.2 1111.9,455.2 1115.4,456.7 1118.9,457.1 1122.8,457.1 1126.2,454.8 1130.1,457.1 1133.4,459.7 1136.9,457.1 1140.5,458.3 1143.8,456.7 1147.7,458.7 1151.0,457.1 1154.5,456.7 1158.1,461.0 1160.8,460.2 1164.7,461.6 1168.6,460.6 1172.1,458.3 1175.7,453.2 1179.0,454.8 1182.9,459.7 1186.2,457.1 1189.7,452.4 1192.7,452.4 1196.6,457.7 1200.5,462.6 1205.0,463.0 1205.0,463.0 1209.9,458.3 1213.8,461.0 1217.7,457.7 1221.6,462.2 1225.5,463.0 1230.4,462.2 1234.7,459.7 1238.3,452.4 1242.2,454.8 1245.1,457.7 1249.0,459.7 1252.9,463.0 1256.3,462.2 1259.8,459.7 1263.7,454.4 1267.6,461.0 1271.5,464.2 1275.4,464.6 1279.3,463.6 1283.3,459.7 1287.2,461.0 1291.1,454.8 1295.4,458.3 1298.9,460.6 1302.4,460.6" fill="none" stroke="#ffba00" stroke-width="2" stroke-linejoin="round" stroke-linecap="round"/>
<polyline points="1309.1,459.1 1312.2,457.7 1315.5,461.6 1319.4,463.6 1323.4,458.7 1327.3,455.2 1330.2,453.2 1334.1,456.7 1338.0,457.7 1341.9,458.7 1345.9,461.0 1349.8,461.6 1352.7,457.7 1355.6,455.8 1359.5,465.5 1362.5,468.1 1365.4,465.5 1369.3,463.0" fill="none" stroke="#ffba00" stroke-width="2" stroke-linejoin="round" stroke-linecap="round"/>
<text x="157.5" y="425.5" font-size="12" font-weight="bold" fill="#e65100" text-anchor="middle" font-family="'Liberation Sans',sans-serif">30°</text>
<text x="157.5" y="433.5" font-size="12" font-weight="bold" fill="#e65100" text-anchor="middle" font-family="'Liberation Sans',sans-serif">25°</text>
<text x="158.5" y="453.5" font-size="12" font-weight="bold" fill="#e65100" text-anchor="middle" font-family="'Liberation Sans',sans-serif">10°</text>
<text x="155.5" y="468.5" font-size="12" font-weight="bold" fill="#e65100" text-anchor="middle" font-family="'Liberation Sans',sans-serif">0°</text>
<text x="126.5" y="505.7" font-size="11" fill="#1e88e5" text-anchor="middle" stroke="#fff" stroke-width="1.4" stroke-opacity="0.6">16</text>
<text x="126.5" y="505.7" font-size="11" fill="#1e88e5" text-anchor="middle">16</text>
<text x="143.1" y="436.9" font-size="11" fill="#1e88e5" text-anchor="middle" stroke="#fff" stroke-width="1.4" stroke-opacity="0.6">70</text>
<text x="143.1" y="436.9" font-size="11" fill="#1e88e5" text-anchor="middle">70</text>
<text x="170.5" y="425.1" font-size="11" fill="#1e88e5" text-anchor="middle" stroke="#fff" stroke-width="1.4" stroke-opacity="0.6">63</text>
<text x="170.5" y="425.1" font-size="11" fill="#1e88e5" text-anchor="middle">63</text>
<text x="160.3" y="496.9" font-size="11" fill="#1e88e5" text-anchor="middle" stroke="#fff" stroke-width="1.4" stroke-opacity="0.6">21</text>
<text x="160.3" y="496.9" font-size="11" fill="#1e88e5" text-anchor="middle">21</text>
<text x="136.2" y="530.2" font-size="11" fill="#1e88e5" text-anchor="middle" stroke="#fff" stroke-width="1.4" stroke-opacity="0.6">2</text>
<text x="136.2" y="530.2" font-size="11" fill="#1e88e5" text-anchor="middle">2</text>
<text x="153.1" y="523.7" font-size="11" fill="#1e88e5" text-anchor="middle" stroke="#fff" stroke-width="1.4" stroke-opacity="0.6">5</text>
<text x="153.1" y="523.7" font-size="11" fill="#1e88e5" text-anchor="middle">5</text>
<text x="159.9" y="531.1" font-size="11" fill="#1e88e5" text-anchor="middle" stroke="#fff" stroke-width="1.4" stroke-opacity="0.6">1</text>
<text x="159.9" y="531.1" font-size="11" fill="#1e88e5" text-anchor="middle">1</text>
<text x="318.9" y="456.4" font-size="11" fill="#1e88e5" text-anchor="middle" stroke="#fff" stroke-width="1.4" stroke-opacity="0.6">45</text>
<text x="318.9" y="456.4" font-size="11" fill="#1e88e5" text-anchor="middle">45</text>
<text x="330.5" y="501.8" font-size="11" fill="#1e88e5" text-anchor="middle" stroke="#fff" stroke-width="1.4" stroke-opacity="0.6">18</text>
<text x="330.5" y="501.8" font-size="11" fill="#1e88e5" text-anchor="middle">18</text>
<text x="330.5" y="517.8" font-size="11" fill="#1e88e5" text-anchor="middle" stroke="#fff" stroke-width="1.4" stroke-opacity="0.6">9</text>
<text x="330.5" y="517.8" font-size="11" fill="#1e88e5" text-anchor="middle">9</text>
<text x="318.9" y="523.7" font-size="11" fill="#1e88e5" text-anchor="middle" stroke="#fff" stroke-width="1.4" stroke-opacity="0.6">5</text>
<text x="318.9" y="523.7" font-size="11" fill="#1e88e5" text-anchor="middle">5</text>
<text x="311.9" y="531.1" font-size="11" fill="#1e88e5" text-anchor="middle" stroke="#fff" stroke-width="1.4" stroke-opacity="0.6">1</text>
<text x="311.9" y="531.1" font-size="11" fill="#1e88e5" text-anchor="middle">1</text>
<text x="437.3" y="532.1" font-size="11" font-weight="bold" fill="#1e88e5" text-anchor="middle" stroke="#fff" stroke-width="2" paint-order="stroke" font-family="'DejaVu Sans Condensed','Liberation Sans',sans-serif">0.3</text>
<text x="491.1" y="525.3" font-size="11" font-weight="bold" fill="#1e88e5" text-anchor="middle" stroke="#fff" stroke-width="2" paint-order="stroke" font-family="'DejaVu Sans Condensed','Liberation Sans',sans-serif">4.9</text>
<text x="557.6" y="531.1" font-size="11" font-weight="bold" fill="#1e88e5" text-anchor="middle" stroke="#fff" stroke-width="2" paint-order="stroke" font-family="'DejaVu Sans Condensed','Liberation Sans',sans-serif">1.2</text>
<text x="1166.3" y="517.1" font-size="11" font-weight="bold" fill="#1e88e5" text-anchor="middle" stroke="#fff" stroke-width="2" paint-order="stroke" font-family="'DejaVu Sans Condensed','Liberation Sans',sans-serif">9.6</text>
<text x="1171.2" y="533.1" font-size="11" font-weight="bold" fill="#1e88e5" text-anchor="middle" stroke="#fff" stroke-width="2" paint-order="stroke" font-family="'DejaVu Sans Condensed','Liberation Sans',sans-serif">0.2</text>
<text x="1240.6" y="533.1" font-size="11" font-weight="bold" fill="#1e88e5" text-anchor="middle" stroke="#fff" stroke-width="2" paint-order="stroke" font-family="'DejaVu Sans Condensed','Liberation Sans',sans-serif">0.2</text>
<text x="1308.3" y="479.3" font-size="11" fill="#1e88e5" text-anchor="middle" stroke="#fff" stroke-width="1.4" stroke-opacity="0.6">31.4</text>
<text x="1308.3" y="479.3" font-size="11" fill="#1e88e5" text-anchor="middle">31.4</text>
<text x="1304.8" y="506.1" font-size="11" fill="#1e88e5" text-anchor="middle" stroke="#fff" stroke-width="1.4" stroke-opacity="0.6">15.6</text>
<text x="1304.8" y="506.1" font-size="11" fill="#1e88e5" text-anchor="middle">15.6</text>
<text x="1356.6" y="497.5" font-size="11" fill="#1e88e5" text-anchor="middle" stroke="#fff" stroke-width="1.4" stroke-opacity="0.6">20.8</text>
<text x="1356.6" y="497.5" font-size="11" fill="#1e88e5" text-anchor="middle">20.8</text>
<text x="1308.3" y="532.7" font-size="11" font-weight="bold" fill="#1e88e5" text-anchor="middle" stroke="#fff" stroke-width="2" paint-order="stroke" font-family="'DejaVu Sans Condensed','Liberation Sans',sans-serif">0.4</text>
<text x="1340.0" y="527.6" font-size="11" font-weight="bold" fill="#1e88e5" text-anchor="middle" stroke="#fff" stroke-width="2" paint-order="stroke" font-family="'DejaVu Sans Condensed','Liberation Sans',sans-serif">3.4</text>
<text x="1359.5" y="532.7" font-size="11" font-weight="bold" fill="#1e88e5" text-anchor="middle" stroke="#fff" stroke-width="2" paint-order="stroke" font-family="'DejaVu Sans Condensed','Liberation Sans',sans-serif">0.8</text>
<text x="910" y="416" font-size="12.6" font-weight="bold" fill="#e53935" text-anchor="middle" font-family="'Liberation Sans',sans-serif">Temp. Máxima</text>
<text x="916" y="467" font-size="12.6" font-weight="bold" fill="#ffba00" text-anchor="middle" font-family="'Liberation Sans',sans-serif">Temp. Mínima</text>
<text x="54.5" y="405" font-size="11" fill="#666" text-anchor="end">8</text>
<text x="88" y="405" font-size="11" fill="#666" text-anchor="end">80</text>
<text x="1371" y="405" font-size="11" fill="#666" text-anchor="end">48</text>
<text x="54.5" y="473.4" font-size="11" fill="#666" text-anchor="end">4</text>
<text x="88" y="473.4" font-size="11" fill="#666" text-anchor="end">40</text>
<text x="1371" y="473.4" font-size="11" fill="#666" text-anchor="end">0</text>
<text x="54.5" y="541.8" font-size="11" fill="#666" text-anchor="end">0</text>
<text x="88" y="541.8" font-size="11" fill="#666" text-anchor="end">0</text>
<text x="1371" y="541.8" font-size="11" fill="#666" text-anchor="end">-48</text>
<text transform="translate(42.5,471.5) rotate(-90)" font-size="11.8" fill="#666" text-anchor="middle">Milimetros Et (mm)</text>
<text transform="translate(70,471.5) rotate(-90)" font-size="11.5" fill="#666" text-anchor="middle">Milimetros Precip (mm)</text>
<text transform="translate(1374.5,471) rotate(90)" font-size="11.6" fill="#666" text-anchor="middle">grados Celcius (°)</text>
<text transform="translate(92.5,560.9) rotate(-45)" font-size="10.8" fill="#666" text-anchor="end">1 jun, 2024</text>
<text transform="translate(110.2,560.9) rotate(-45)" font-size="10.8" fill="#666" text-anchor="end">6 jun, 2024</text>
<text transform="translate(127.8,560.9) rotate(-45)" font-size="10.8" fill="#666" text-anchor="end">11 jun, 2024</text>
<text transform="translate(145.4,560.9) rotate(-45)" font-size="10.8" fill="#666" text-anchor="end">16 jun, 2024</text>
<text transform="translate(163.1,560.9) rotate(-45)" font-size="10.8" fill="#666" text-anchor="end">21 jun, 2024</text>
<text transform="translate(180.7,560.9) rotate(-45)" font-size="10.8" fill="#666" text-anchor="end">26 jun, 2024</text>
<text transform="translate(198.3,560.9) rotate(-45)" font-size="10.8" fill="#666" text-anchor="end">1 jul, 2024</text>
<text transform="translate(216.0,560.9) rotate(-45)" font-size="10.8" fill="#666" text-anchor="end">6 jul, 2024</text>
<text transform="translate(233.6,560.9) rotate(-45)" font-size="10.8" fill="#666" text-anchor="end">11 jul, 2024</text>
<text transform="translate(251.2,560.9) rotate(-45)" font-size="10.8" fill="#666" text-anchor="end">16 jul, 2024</text>
<text transform="translate(268.8,560.9) rotate(-45)" font-size="10.8" fill="#666" text-anchor="end">21 jul, 2024</text>
<text transform="translate(286.5,560.9) rotate(-45)" font-size="10.8" fill="#666" text-anchor="end">26 jul, 2024</text>
<text transform="translate(304.1,560.9) rotate(-45)" font-size="10.8" fill="#666" text-anchor="end">31 jul, 2024</text>
<text transform="translate(321.7,560.9) rotate(-45)" font-size="10.8" fill="#666" text-anchor="end">5 ago, 2024</text>
<text transform="translate(339.4,560.9) rotate(-45)" font-size="10.8" fill="#666" text-anchor="end">10 ago, 2024</text>
<text transform="translate(357.0,560.9) rotate(-45)" font-size="10.8" fill="#666" text-anchor="end">15 ago, 2024</text>
<text transform="translate(374.6,560.9) rotate(-45)" font-size="10.8" fill="#666" text-anchor="end">20 ago, 2024</text>
<text transform="translate(392.3,560.9) rotate(-45)" font-size="10.8" fill="#666" text-anchor="end">25 ago, 2024</text>
<text transform="translate(409.9,560.9) rotate(-45)" font-size="10.8" fill="#666" text-anchor="end">30 ago, 2024</text>
<text transform="translate(427.5,560.9) rotate(-45)" font-size="10.8" fill="#666" text-anchor="end">4 sep, 2024</text>
<text transform="translate(445.1,560.9) rotate(-45)" font-size="10.8" fill="#666" text-anchor="end">9 sep, 2024</text>
<text transform="translate(462.8,560.9) rotate(-45)" font-size="10.8" fill="#666" text-anchor="end">14 sep, 2024</text>
<text transform="translate(480.4,560.9) rotate(-45)" font-size="10.8" fill="#666" text-anchor="end">19 sep, 2024</text>
<text transform="translate(498.0,560.9) rotate(-45)" font-size="10.8" fill="#666" text-anchor="end">24 sep, 2024</text>
<text transform="translate(515.7,560.9) rotate(-45)" font-size="10.8" fill="#666" text-anchor="end">29 sep, 2024</text>
<text transform="translate(533.3,560.9) rotate(-45)" font-size="10.8" fill="#666" text-anchor="end">4 oct, 2024</text>
<text transform="translate(550.9,560.9) rotate(-45)" font-size="10.8" fill="#666" text-anchor="end">9 oct, 2024</text>
<text transform="translate(568.6,560.9) rotate(-45)" font-size="10.8" fill="#666" text-anchor="end">14 oct, 2024</text>
<text transform="translate(586.2,560.9) rotate(-45)" font-size="10.8" fill="#666" text-anchor="end">19 oct, 2024</text>
<text transform="translate(603.8,560.9) rotate(-45)" font-size="10.8" fill="#666" text-anchor="end">24 oct, 2024</text>
<text transform="translate(621.4,560.9) rotate(-45)" font-size="10.8" fill="#666" text-anchor="end">29 oct, 2024</text>
<text transform="translate(639.1,560.9) rotate(-45)" font-size="10.8" fill="#666" text-anchor="end">3 nov, 2024</text>
<text transform="translate(656.7,560.9) rotate(-45)" font-size="10.8" fill="#666" text-anchor="end">8 nov, 2024</text>
<text transform="translate(674.3,560.9) rotate(-45)" font-size="10.8" fill="#666" text-anchor="end">13 nov, 2024</text>
<text transform="translate(692.0,560.9) rotate(-45)" font-size="10.8" fill="#666" text-anchor="end">18 nov, 2024</text>
<text transform="translate(709.6,560.9) rotate(-45)" font-size="10.8" fill="#666" text-anchor="end">23 nov, 2024</text>
<text transform="translate(727.2,560.9) rotate(-45)" font-size="10.8" fill="#666" text-anchor="end">28 nov, 2024</text>
<text transform="translate(744.9,560.9) rotate(-45)" font-size="10.8" fill="#666" text-anchor="end">3 dic, 2024</text>
<text transform="translate(762.5,560.9) rotate(-45)" font-size="10.8" fill="#666" text-anchor="end">8 dic, 2024</text>
<text transform="translate(780.1,560.9) rotate(-45)" font-size="10.8" fill="#666" text-anchor="end">13 dic, 2024</text>
<text transform="translate(797.7,560.9) rotate(-45)" font-size="10.8" fill="#666" text-anchor="end">18 dic, 2024</text>
<text transform="translate(815.4,560.9) rotate(-45)" font-size="10.8" fill="#666" text-anchor="end">23 dic, 2024</text>
<text transform="translate(833.0,560.9) rotate(-45)" font-size="10.8" fill="#666" text-anchor="end">28 dic, 2024</text>
<text transform="translate(850.6,560.9) rotate(-45)" font-size="10.8" fill="#666" text-anchor="end">2 ene, 2025</text>
<text transform="translate(868.3,560.9) rotate(-45)" font-size="10.8" fill="#666" text-anchor="end">7 ene, 2025</text>
<text transform="translate(885.9,560.9) rotate(-45)" font-size="10.8" fill="#666" text-anchor="end">12 ene, 2025</text>
<text transform="translate(903.5,560.9) rotate(-45)" font-size="10.8" fill="#666" text-anchor="end">17 ene, 2025</text>
<text transform="translate(921.2,560.9) rotate(-45)" font-size="10.8" fill="#666" text-anchor="end">22 ene, 2025</text>
<text transform="translate(938.8,560.9) rotate(-45)" font-size="10.8" fill="#666" text-anchor="end">27 ene, 2025</text>
<text transform="translate(956.4,560.9) rotate(-45)" font-size="10.8" fill="#666" text-anchor="end">1 feb, 2025</text>
<text transform="translate(974.0,560.9) rotate(-45)" font-size="10.8" fill="#666" text-anchor="end">6 feb, 2025</text>
<text transform="translate(991.7,560.9) rotate(-45)" font-size="10.8" fill="#666" text-anchor="end">11 feb, 2025</text>
<text transform="translate(1009.3,560.9) rotate(-45)" font-size="10.8" fill="#666" text-anchor="end">16 feb, 2025</text>
<text transform="translate(1026.9,560.9) rotate(-45)" font-size="10.8" fill="#666" text-anchor="end">21 feb, 2025</text>
<text transform="translate(1044.6,560.9) rotate(-45)" font-size="10.8" fill="#666" text-anchor="end">26 feb, 2025</text>
<text transform="translate(1062.2,560.9) rotate(-45)" font-size="10.8" fill="#666" text-anchor="end">3 mar, 2025</text>
<text transform="translate(1079.8,560.9) rotate(-45)" font-size="10.8" fill="#666" text-anchor="end">8 mar, 2025</text>
<text transform="translate(1097.5,560.9) rotate(-45)" font-size="10.8" fill="#666" text-anchor="end">13 mar, 2025</text>
<text transform="translate(1115.1,560.9) rotate(-45)" font-size="10.8" fill="#666" text-anchor="end">18 mar, 2025</text>
<text transform="translate(1132.7,560.9) rotate(-45)" font-size="10.8" fill="#666" text-anchor="end">23 mar, 2025</text>
<text transform="translate(1150.3,560.9) rotate(-45)" font-size="10.8" fill="#666" text-anchor="end">28 mar, 2025</text>
<text transform="translate(1168.0,560.9) rotate(-45)" font-size="10.8" fill="#666" text-anchor="end">2 abr, 2025</text>
<text transform="translate(1185.6,560.9) rotate(-45)" font-size="10.8" fill="#666" text-anchor="end">7 abr, 2025</text>
<text transform="translate(1203.2,560.9) rotate(-45)" font-size="10.8" fill="#666" text-anchor="end">12 abr, 2025</text>
<text transform="translate(1220.9,560.9) rotate(-45)" font-size="10.8" fill="#666" text-anchor="end">17 abr, 2025</text>
<text transform="translate(1238.5,560.9) rotate(-45)" font-size="10.8" fill="#666" text-anchor="end">22 abr, 2025</text>
<text transform="translate(1256.1,560.9) rotate(-45)" font-size="10.8" fill="#666" text-anchor="end">27 abr, 2025</text>
<text transform="translate(1273.8,560.9) rotate(-45)" font-size="10.8" fill="#666" text-anchor="end">2 may, 2025</text>
<text transform="translate(1291.4,560.9) rotate(-45)" font-size="10.8" fill="#666" text-anchor="end">7 may, 2025</text>
<text transform="translate(1309.0,560.9) rotate(-45)" font-size="10.8" fill="#666" text-anchor="end">12 may, 2025</text>
<text transform="translate(1326.6,560.9) rotate(-45)" font-size="10.8" fill="#666" text-anchor="end">17 may, 2025</text>
<text transform="translate(1344.3,560.9) rotate(-45)" font-size="10.8" fill="#666" text-anchor="end">22 may, 2025</text>
<text transform="translate(1361.9,560.9) rotate(-45)" font-size="10.8" fill="#666" text-anchor="end">27 may, 2025</text>
<text x="45" y="357.5" font-size="17.3" fill="#212121">Estación Meteorológica</text>
<text x="45" y="384" font-size="12" font-weight="bold" fill="#1e88e5" font-family="'Liberation Sans',sans-serif">Maria Pinto</text>
<text x="126" y="384" font-size="12" fill="#333">2024–2025</text>
<circle cx="81" cy="631" r="6" fill="#0b5b5e"/>
<text x="95" y="635.5" font-size="12" font-weight="bold" fill="#333" font-family="'Liberation Sans',sans-serif">Eto</text>
<circle cx="241" cy="631" r="6" fill="#1e88e5"/>
<text x="255" y="635.5" font-size="12" font-weight="bold" fill="#333" font-family="'Liberation Sans',sans-serif">Precipitación</text>
<path d="M394 631H410" stroke="#e53935" stroke-width="2"/>
<text x="415" y="635.5" font-size="12" font-weight="bold" fill="#333" font-family="'Liberation Sans',sans-serif">Temp. Máxima</text>
<path d="M554 631H570" stroke="#ffba00" stroke-width="2"/>
<text x="575" y="635.5" font-size="12" font-weight="bold" fill="#333" font-family="'Liberation Sans',sans-serif">Temp. Mínima</text>
<circle cx="721" cy="631" r="6" fill="#ccc"/>
<text x="735" y="635.5" font-size="12" font-weight="bold" fill="#ccc" font-family="'Liberation Sans',sans-serif">Temp. Máxima (bar…</text>
<circle cx="881" cy="631" r="6" fill="#ccc"/>
<text x="895" y="635.5" font-size="12" font-weight="bold" fill="#ccc" font-family="'Liberation Sans',sans-serif">Temp. Mínima (barr…</text>
<circle cx="1041" cy="631" r="6" fill="#ccc"/>
<text x="1055" y="635.5" font-size="12" font-weight="bold" fill="#ccc" font-family="'Liberation Sans',sans-serif">Diferencia Tempera…</text>
<circle cx="1201" cy="631" r="6" fill="#ccc"/>
<text x="1215" y="635.5" font-size="12" font-weight="bold" fill="#ccc" font-family="'Liberation Sans',sans-serif">Delta (max – min)</text>
<path d="M74 659H90" stroke="#ccc" stroke-width="2"/>
<text x="95" y="663.5" font-size="12" font-weight="bold" fill="#ccc" font-family="'Liberation Sans',sans-serif">Sumatoria Deltas</text>
<text x="1391" y="676" font-size="9.2" fill="#8a8a8a" text-anchor="end">Irricrops</text>
<g transform="translate(1319,301)" fill="#757575"><path d="M5,5H10V7H7V10H5V5M14,5H19V10H17V7H14V5M17,14H19V19H14V17H17V14M10,17V19H5V14H7V17H10Z"/></g>
<g transform="translate(1355,301)" fill="#757575"><path d="M5,20H19V18H5M19,9H15V3H9V9H5L12,16L19,9Z"/></g>
</svg>

<!-- top bars -->
<div id="bar2" class="abs"></div>
<div id="bar1" class="abs"></div>
<svg class="ic" style="left:16px;top:20px" viewBox="0 0 24 24"><path d="M3,6H21V8H3V6M3,11H21V13H3V11M3,16H21V18H3V16Z"/></svg>
<div id="logo" class="abs">Irricrops</div>
<svg class="ic" style="left:198px;top:20px" viewBox="0 0 24 24"><path d="M14,6L10.25,11L13.1,14.8L11.5,16C9.81,13.75 7,10 7,10L1,18H23L14,6Z"/></svg>
<div class="abs navt" style="left:243px;top:21px">Campo</div>
<svg class="ic" style="left:316px;top:20px" viewBox="0 0 24 24"><path d="M7,10L12,15L17,10H7Z"/></svg>
<svg class="ic" style="left:364px;top:20px" viewBox="0 0 24 24"><path d="M4,10V14H13L9.5,17.5L11.92,19.92L19.84,12L11.92,4.08L9.5,6.5L13,10H4Z"/></svg>
<svg class="ic" style="left:416px;top:20px" viewBox="0 0 24 24"><path d="M12.74,5.47C15.1,6.5 16.35,9.03 15.92,11.46C17.19,12.56 18,14.19 18,16V16.17C18.31,16.06 18.65,16 19,16A3,3 0 0,1 22,19A3,3 0 0,1 19,22H6A4,4 0 0,1 2,18A4,4 0 0,1 6,14H6.27C5,12.45 4.6,10.24 5.5,8.26C6.72,5.5 9.97,4.24 12.74,5.47M11.93,7.3C10.16,6.5 8.09,7.31 7.31,9.07C6.85,10.09 6.93,11.22 7.41,12.13C8.5,10.83 10.16,10 12,10C12.7,10 13.38,10.12 14,10.34C13.94,9.06 13.18,7.86 11.93,7.3M13.55,3.64C13,3.4 12.45,3.23 11.88,3.12L14.37,1.82L15.27,4.71C14.76,4.29 14.19,3.93 13.55,3.64M6.09,4.44C5.6,4.79 5.17,5.19 4.8,5.63L4.91,2.82L7.87,3.5C7.25,3.71 6.65,4.03 6.09,4.44M18,9.71C17.91,9.12 17.78,8.55 17.59,8L19.97,9.5L17.92,11.73C18.03,11.08 18.05,10.4 18,9.71M3.04,11.3C3.11,11.9 3.24,12.47 3.43,13L1.06,11.5L3.1,9.28C3,9.93 2.97,10.61 3.04,11.3M19,18H16V16A4,4 0 0,0 12,12A4,4 0 0,0 8,16H6A2,2 0 0,0 4,18A2,2 0 0,0 6,20H19A1,1 0 0,0 20,19A1,1 0 0,0 19,18Z"/></svg>
<div class="abs navt" style="left:450px;top:19.5px">Estación Met.</div>
<svg class="ic" style="left:583px;top:20px" viewBox="0 0 24 24"><path d="M7,10L12,15L17,10H7Z"/></svg>
<svg class="ic" style="left:1222px;top:20px" viewBox="0 0 24 24"><path d="M5,20H19V18H5M19,9H15V3H9V9H5L12,16L19,9Z"/></svg>
<svg class="ic" style="left:1270px;top:20px" viewBox="0 0 24 24"><path d="M9,16V10H5L12,3L19,10H15V16H9M5,20V18H19V20H5Z"/></svg>
<svg class="ic" style="left:1318px;top:20px" viewBox="0 0 24 24"><path d="M13,4.8C9,4.8 9,19.2 13,19.2C17,19.2 22,16.5 22,12C22,7.5 17,4.8 13,4.8M13.1,17.2C12.7,16.8 12,15 12,12C12,9 12.7,7.2 13.1,6.8C16,6.9 20,8.7 20,12C20,15.3 16,17.1 13.1,17.2M2,5H9.5C9.3,5.4 9,6 8.8,7H2V5M8,11H2V9H8.2C8.1,9.6 8.1,10.3 8,11M8.7,17C9,18 9.2,18.6 9.5,19H2V17H8.7M8.2,15H2V13H8C8.1,13.7 8.1,14.4 8.2,15Z"/></svg>
<svg class="ic" style="left:1366px;top:20px" viewBox="0 0 24 24"><path d="M12,4A4,4 0 0,1 16,8A4,4 0 0,1 12,12A4,4 0 0,1 8,8A4,4 0 0,1 12,4M12,14C16.42,14 20,15.79 20,18V20H4V18C4,15.79 7.58,14 12,14Z"/></svg>

<!-- second bar -->
<div class="abs pill" style="left:8px;top:72px;width:200px;height:38px"></div>
<div class="abs" style="left:20.5px;top:80px;font-size:16px;line-height:24px;color:#fff">Temporada</div>
<svg class="ic" style="left:172px;top:79px" viewBox="0 0 24 24"><path d="M7,10L12,15L17,10H7Z"/></svg>
<div class="abs pill" style="left:216px;top:72px;width:192px;height:38px"></div>
<div class="abs" style="left:216px;top:104px;width:86px;height:4px;background:#fff"></div>
<div class="abs btxt" style="left:233.5px;top:71px">DIARIO</div>
<div class="abs btxt" style="left:319px;top:73px">MENSUAL</div>
<div class="abs" style="left:428px;top:72px;width:1px;height:38px;background:#23553e"></div>
<div class="abs pill" style="left:441px;top:72px;width:158px;height:36px"></div>
<div class="abs btxt" style="left:458px;top:73px">COMPARAR</div>
<svg class="ic" style="left:559px;top:78px" viewBox="0 0 24 24"><path d="M3 16H10V14H3M18 14V10H16V14H12V16H16V20H18V16H22V14M14 6H3V8H14M14 10H3V12H14V10Z"/></svg>
<div class="abs pill" style="left:607px;top:72px;width:137px;height:36px"></div>
<div class="abs btxt" style="left:624.5px;top:73px;letter-spacing:0.42px">RECARGAR</div>
<svg class="ic" style="left:714px;top:81px;width:18px;height:18px" viewBox="0 0 24 24"><path d="M19,8L15,12H18A6,6 0 0,1 12,18C11,18 10.03,17.75 9.2,17.3L7.74,18.76C8.97,19.54 10.43,20 12,20A8,8 0 0,0 20,12H23M6,12A6,6 0 0,1 12,6C13,6 13.97,6.25 14.8,6.7L16.26,5.24C15.03,4.46 13.57,4 12,4A8,8 0 0,0 4,12H1L5,16L9,12"/></svg>
<svg class="ic" style="left:1380px;top:78px" viewBox="0 0 24 24"><path d="M12,16A2,2 0 0,1 14,18A2,2 0 0,1 12,20A2,2 0 0,1 10,18A2,2 0 0,1 12,16M12,10A2,2 0 0,1 14,12A2,2 0 0,1 12,14A2,2 0 0,1 10,12A2,2 0 0,1 12,10M12,4A2,2 0 0,1 14,6A2,2 0 0,1 12,8A2,2 0 0,1 10,6A2,2 0 0,1 12,4Z"/></svg>

<!-- scrollbar -->
<div id="sb" class="abs"></div>
<div id="sbthumb" class="abs"></div>
<svg class="abs" style="left:1418px;top:0" width="15" height="16" viewBox="0 0 15 16"><path d="M7.5 5 L12.3 12 L2.7 12 Z" fill="#9f9f9f"/></svg>
<svg class="abs" style="left:1418px;top:725px" width="15" height="16" viewBox="0 0 15 16"><path d="M7.5 12 L12.3 5 L2.7 5 Z" fill="#9f9f9f"/></svg>
</body>
</html>
